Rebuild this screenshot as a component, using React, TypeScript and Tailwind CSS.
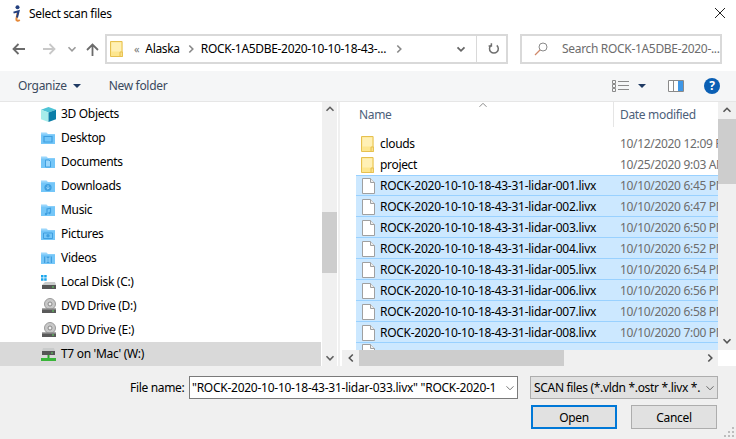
import React from "react";

const Chev = ({ d, className = "", c = "#555", w = 1.6 }: { d: string; className?: string; c?: string; w?: number }) => (
  <svg width="10" height="10" viewBox="0 0 10 10" className={className} fill="none" stroke={c} strokeWidth={w}>
    <path d={d} />
  </svg>
);
const UP = "M1.5 6.8 5 3.3l3.5 3.5";
const DOWN = "M1.5 3.3 5 6.8l3.5-3.5";
const LEFT = "M6.8 1.5 3.3 5l3.5 3.5";
const RIGHT = "M3.3 1.5 6.8 5 3.3 8.5";

const YFolder = ({ className = "" }: { className?: string }) => (
  <svg width="13" height="16" viewBox="0 0 13 16" className={className}>
    <path d="M.5.5h11.6v15H.5z" fill="#fde68f" stroke="#e6c04f" />
    <path d="M1.5 1.5h9.6v9H1.5z" fill="#fff0b5" />
    <path d="M10 11h2.6v4.5H10z" fill="#fbe08a" stroke="#e6c04f" />
  </svg>
);

const BlueFolder = ({ children }: { children?: React.ReactNode }) => (
  <svg width="16" height="16" viewBox="0 0 16 16" className="shrink-0">
    <path d="M1 2.5h5.5L8 4h7v1H1z" fill="#9ad6fb" />
    <path d="M1 4.5h14V14H1z" fill="#74c6f8" />
    {children}
  </svg>
);

const ic = "#3f9fe0";
const navIcons: Record<string, React.ReactNode> = {
  cube: (
    <svg width="17" height="17" viewBox="0 0 17 17" className="shrink-0">
      <path d="M8.5 1 16 3.8 8.5 6.5 1 3.8z" fill="#4fc4d6" />
      <path d="M1 3.8 8.5 6.5V16L1 13.2z" fill="#a6ecea" />
      <path d="M16 3.8 8.5 6.5V16l7.5-2.8z" fill="#0b7ea8" />
    </svg>
  ),
  desktop: (
    <BlueFolder>
      <path d="M4 6.5h8v5.5H4z" fill="none" stroke={ic} strokeWidth="1.2" />
    </BlueFolder>
  ),
  documents: (
    <BlueFolder>
      <path d="M5.5 6h3.5l1.5 1.5V13h-5z" fill="#9ad6fb" stroke={ic} />
    </BlueFolder>
  ),
  downloads: (
    <BlueFolder>
      <circle cx="8" cy="9.5" r="3.6" fill={ic} />
      <path d="M8 7.3v3.6M6.3 9.5 8 11.2l1.7-1.7" stroke="#9ad6fb" fill="none" />
    </BlueFolder>
  ),
  music: (
    <BlueFolder>
      <path d="M7 12V7l3.5-.8v4.6" stroke={ic} strokeWidth="1.2" fill="none" />
      <circle cx="6" cy="12" r="1.2" fill={ic} />
      <circle cx="9.5" cy="11" r="1.2" fill={ic} />
    </BlueFolder>
  ),
  pictures: (
    <BlueFolder>
      <path d="M3.5 7h9v5.5h-9z" fill="none" stroke={ic} />
      <circle cx="8" cy="9.7" r="1.7" fill={ic} />
    </BlueFolder>
  ),
  videos: (
    <BlueFolder>
      <path d="M4 6.5h8V13H4z" fill={ic} />
      <path d="M6 6.5V13M10 6.5V13M6 9h4M6 11h4" stroke="#9ad6fb" />
    </BlueFolder>
  ),
  local: (
    <svg width="17" height="16" viewBox="0 0 17 16" className="shrink-0">
      <path d="M1 1h2.5v2.5H1zM4.2 1h2.5v2.5H4.2zM1 4.2h2.5v2.5H1zM4.2 4.2h2.5v2.5H4.2z" fill="#19a5ec" />
      <path d="M5 8h10l1 3H2z" fill="#c9cbcb" />
      <path d="M2 11h14v4H2z" fill="#555" />
      <path d="M12 12.5h2v1h-2z" fill="#5fd35f" />
    </svg>
  ),
  dvd: (
    <svg width="17" height="16" viewBox="0 0 17 16" className="shrink-0">
      <circle cx="10" cy="6" r="5.5" fill="#c8c8c8" stroke="#9a9a9a" />
      <circle cx="10" cy="6" r="2" fill="#efefef" stroke="#888" />
      <path d="M2 10.5h14V15H2z" fill="#5a5a5a" />
      <path d="M2 10.5h14v1H2z" fill="#a9a9a9" />
      <path d="M12 12.5h2v1h-2z" fill="#5fd35f" />
    </svg>
  ),
  net: (
    <svg width="17" height="16" viewBox="0 0 17 16" className="shrink-0">
      <path d="M3 2h11l1 3H2z" fill="#c9cbcb" />
      <path d="M2 5h13v4H2z" fill="#555" />
      <path d="M11 6.5h2v1h-2z" fill="#5fd35f" />
      <path d="M7.5 9h2v3h-2z" fill="#2fa52f" />
      <path d="M1 12h15v3H1z" fill="#39b539" />
    </svg>
  ),
};

const nav: [string, string][] = [
  ["cube", "3D Objects"],
  ["desktop", "Desktop"],
  ["documents", "Documents"],
  ["downloads", "Downloads"],
  ["music", "Music"],
  ["pictures", "Pictures"],
  ["videos", "Videos"],
  ["local", "Local Disk (C:)"],
  ["dvd", "DVD Drive (D:)"],
  ["dvd", "DVD Drive (E:)"],
  ["net", "T7 on 'Mac' (W:)"],
];

const files: [string, string][] = [
  ["001", "10/10/2020 6:45 PM"],
  ["002", "10/10/2020 6:47 PM"],
  ["003", "10/10/2020 6:50 PM"],
  ["004", "10/10/2020 6:52 PM"],
  ["005", "10/10/2020 6:54 PM"],
  ["006", "10/10/2020 6:56 PM"],
  ["007", "10/10/2020 6:58 PM"],
  ["008", "10/10/2020 7:00 PM"],
];

const FileIcon = () => (
  <svg width="13" height="16" viewBox="0 0 13 16" className="shrink-0">
    <path d="M.5.5h8l4 4v11H.5z" fill="#fff" stroke="#a0a0a0" />
    <path d="M8.5.5v4h4" fill="#eee" stroke="#a0a0a0" />
  </svg>
);

export default function App() {
  return (
    <div className="w-[736px] h-[439px] overflow-hidden bg-white text-[12px] text-black flex flex-col font-['Noto_Sans','Open_Sans',sans-serif] tracking-[-0.32px] leading-[16px]">
      {/* Title */}
      <div className="h-[34px] flex items-start shrink-0">
        <svg width="12" height="18" viewBox="0 0 12 18" className="ml-[11px] mt-[5px]">
          <circle cx="6.5" cy="2.2" r="2" fill="#24407f" />
          <path d="M6.8 7 5.4 14c-.2 1.6 1.2 2.4 3.4 1" fill="none" stroke="#e68a3a" strokeWidth="2" />
          <path d="M2.5 7.6 7.6 6.2 6 12.5" fill="none" stroke="#24407f" strokeWidth="2" />
        </svg>
        <span className="ml-[6px] mt-[6px]">Select scan files</span>
        <svg width="12" height="12" viewBox="0 0 12 12" className="ml-auto mr-[10px] mt-[7px]" stroke="#222" strokeWidth="1">
          <path d="M1 1l10 10M11 1 1 11" />
        </svg>
      </div>

      {/* Address row */}
      <div className="h-[37px] flex items-start shrink-0">
        <svg width="14" height="12" viewBox="0 0 14 12" className="ml-[12px] mt-[9px]" fill="none" stroke="#6b6b6b" strokeWidth="1.8">
          <path d="M13 6H2M6.5 1 1.5 6l5 5" />
        </svg>
        <svg width="14" height="12" viewBox="0 0 14 12" className="ml-[16px] mt-[9px]" fill="none" stroke="#c8c8c8" strokeWidth="1.8">
          <path d="M1 6h11M7.5 1l5 5-5 5" />
        </svg>
        <Chev d={DOWN} c="#9a9a9a" className="ml-[11px] mt-[10px]" />
        <svg width="13" height="13" viewBox="0 0 13 13" className="ml-[9px] mt-[9px]" fill="none" stroke="#6b6b6b" strokeWidth="1.8">
          <path d="M6.5 13V2M1 7l5.5-5.5L12 7" />
        </svg>
        <div className="ml-[6px] w-[403px] h-[30px] border-2 border-[#d9d9d9] box-border flex items-center">
          <YFolder className="ml-[3px]" />
          <span className="ml-[11px] text-[#777] text-[11px]">«</span>
          <span className="ml-[6px]">Alaska</span>
          <Chev d={RIGHT} c="#888" className="ml-[6px]" />
          <span className="ml-[5px] w-[186px] whitespace-nowrap">ROCK-1A5DBE-2020-10-10-18-43-...</span>
          <Chev d={RIGHT} c="#888" className="ml-[7px]" />
          <Chev d={DOWN} c="#666" w={1.8} className="ml-[52px]" />
          <div className="ml-[10px] w-[1px] h-[26px] bg-[#d9d9d9]" />
          <svg width="12" height="12" viewBox="0 0 12 12" className="ml-[11px]" fill="none" stroke="#6f6f6f" strokeWidth="1.5">
            <path d="M3 2.4A4.4 4.4 0 1 0 8.8 2.4M3.4 .2v2.8H.6" />
          </svg>
        </div>
        <div className="ml-[12px] w-[202px] h-[30px] border-2 border-[#d9d9d9] box-border flex items-center">
          <svg width="14" height="14" viewBox="0 0 14 14" className="ml-[12px]" fill="none">
            <circle cx="9" cy="5" r="4" stroke="#8a8a8a" />
            <path d="M6 8 1 13" stroke="#d0896a" strokeWidth="1.2" />
          </svg>
          <span className="ml-[14px] text-[#6d6d6d] whitespace-nowrap">Search ROCK-1A5DBE-2020-...</span>
        </div>
      </div>

      {/* Command bar */}
      <div className="h-[31px] bg-[#f5f6f7] border-b border-[#e6e6e6] flex items-center shrink-0 text-[#3b4a5e] box-border">
        <span className="ml-[18px]">Organize</span>
        <svg width="8" height="4" viewBox="0 0 8 4" className="ml-[6px]" fill="#1f3a63"><path d="M0 0h8L4 4z" /></svg>
        <span className="ml-[28px]">New folder</span>
        <svg width="17" height="12" viewBox="0 0 17 12" className="ml-auto" fill="none" stroke="#8a8a8a">
          <path d="M.5.5h3v3h-3zM.5 4.5h3v3h-3zM.5 8.5h3v3h-3zM6 1.5h11M6 5.5h11M6 9.5h11" />
        </svg>
        <svg width="8" height="4" viewBox="0 0 8 4" className="ml-[9px]" fill="#1f3a63"><path d="M0 0h8L4 4z" /></svg>
        <svg width="16" height="12" viewBox="0 0 16 12" className="ml-[22px]">
          <path d="M.5.5h15v11H.5z" fill="#fff" stroke="#8a8a8a" />
          <path d="M10 1h5v10h-5z" fill="#3f97e6" />
          <path d="M5.5 1v10" stroke="#8a8a8a" />
        </svg>
        <div className="ml-[20px] mr-[16px] w-[16px] h-[16px] rounded-full bg-[#0a5fb4] text-white text-[12px] font-bold flex items-center justify-center">?</div>
      </div>

      {/* Main */}
      <div className="h-[264px] flex shrink-0">
        <div className="w-[321px] flex flex-col shrink-0">
          {nav.map(([k, t]) => (
            <div key={t} className={`h-[24px] flex items-center shrink-0 pl-[40px] ${k === "net" ? "bg-[#d9d9d9]" : ""}`}>
              <div className="w-[21px]">{navIcons[k]}</div>
              <span>{t}</span>
            </div>
          ))}
        </div>
        <div className="w-[15px] ml-[1px] bg-[#f0f0f0] flex flex-col items-center shrink-0">
          <Chev d={UP} c="#606060" className="mt-[2px] shrink-0" />
          <div className="w-full h-[61px] bg-[#cdcdcd] mt-[98px] shrink-0" />
          <Chev d={DOWN} c="#606060" className="mt-auto mb-[3px]" />
        </div>
        <div className="w-[2px] ml-[1px] bg-[#f0f0f0] shrink-0" />
        <div className="w-[2px] shrink-0" />
        <div className="w-[394px] flex flex-col shrink-0">
          <div className="flex h-[248px] shrink-0">
            <div className="w-[376px] overflow-hidden shrink-0">
              <div className="h-[25px] flex text-[#4c607a] relative">
                <span className="ml-[17px] mt-[5px] w-[254px] shrink-0">Name</span>
                <Chev d={UP} c="#8a8a8a" w={1} className="absolute left-[136px] -top-[2px]" />
                <div className="w-[1px] h-[25px] bg-[#e5e5e5] shrink-0" />
                <span className="ml-[6px] mt-[5px] whitespace-nowrap">Date modified</span>
              </div>
              <div className="pt-[6px] pl-[14px]">
                {[["clouds", "10/12/2020 12:09 PM"], ["project", "10/25/2020 9:03 AM"]].map(([n, d]) => (
                  <div key={n} className="h-[21px] flex items-center overflow-hidden">
                    <YFolder className="ml-[5px] shrink-0" />
                    <span className="ml-[6px] w-[240px] shrink-0">{n}</span>
                    <span className="text-[#6d6d6d] whitespace-nowrap">{d}</span>
                  </div>
                ))}
                {files.map(([n, d], i) => (
                  <div key={n} className={`h-[21px] box-border flex items-center overflow-hidden bg-[#cce8ff] border-b border-[#99d1ff] ${i === 0 ? "border-t" : "pt-[1px]"}`}>
                    <div className="ml-[6px]"><FileIcon /></div>
                    <span className="ml-[5px] w-[240px] shrink-0 whitespace-nowrap tracking-[-0.27px]">ROCK-2020-10-10-18-43-31-lidar-{n}.livx</span>
                    <span className="text-[#6d6d6d] whitespace-nowrap">{d}</span>
                  </div>
                ))}
                <div className="h-[7px] bg-[#cce8ff] overflow-hidden pl-[6px] pt-[1px]"><FileIcon /></div>
              </div>
            </div>
            <div className="w-[18px] bg-[#f0f0f0] flex flex-col items-center shrink-0">
              <Chev d={UP} c="#555" className="mt-[3px] shrink-0" />
              <div className="w-full h-[65px] bg-[#cdcdcd] mt-[4px] shrink-0" />
              <Chev d={DOWN} c="#555" className="mt-auto mb-[4px]" />
            </div>
          </div>
          <div className="h-[16px] flex shrink-0">
            <div className="w-[376px] bg-[#f0f0f0] flex items-center shrink-0">
              <Chev d={LEFT} c="#555" className="ml-[4px]" />
              <div className="h-full w-[205px] bg-[#cdcdcd] ml-[3px]" />
              <Chev d={RIGHT} c="#555" className="ml-auto mr-[3px]" />
            </div>
          </div>
        </div>
      </div>

      {/* Bottom */}
      <div className="flex-1 bg-[#f0f0f0] relative">
        <div className="flex items-start pt-[10px]">
          <span className="ml-[130px] w-[59px] pt-[4px] shrink-0">File name:</span>
          <div className="w-[329px] h-[23px] bg-white border border-[#7a7a7a] box-border flex items-center pl-[2px] shrink-0 overflow-hidden">
            <span className="w-[308px] overflow-hidden whitespace-nowrap shrink-0 tracking-[-0.26px]">"ROCK-2020-10-10-18-43-31-lidar-033.livx" "ROCK-2020-1</span>
            <Chev d={DOWN} c="#777" w={1} className="ml-[5px] shrink-0" />
          </div>
          <div className="ml-[12px] w-[188px] h-[23px] bg-[#e1e1e1] border border-[#adadad] box-border flex items-center pl-[3px] shrink-0 overflow-hidden">
            <span className="w-[168px] overflow-hidden whitespace-nowrap shrink-0">SCAN files (*.vldn *.ostr *.livx *.</span>
            <Chev d={DOWN} c="#666" w={1} className="ml-[3px] shrink-0" />
          </div>
        </div>
        <div className="flex justify-end mt-[6px] pr-[19px] gap-[14px]">
          <div className="w-[86px] h-[24px] pt-[1px] bg-[#e1e1e1] border-2 border-[#0078d7] box-border flex items-center justify-center">Open</div>
          <div className="w-[86px] h-[24px] pt-[1px] bg-[#e1e1e1] border border-[#adadad] box-border flex items-center justify-center">Cancel</div>
        </div>
        <svg width="11" height="11" viewBox="0 0 11 11" className="absolute right-[1px] bottom-[1px]" fill="#bdbdbd">
          <path d="M8 8h2v2H8zM4 8h2v2H4zM0 8h2v2H0zM8 4h2v2H8zM4 4h2v2H4zM8 0h2v2H8z" />
        </svg>
      </div>
    </div>
  );
}
